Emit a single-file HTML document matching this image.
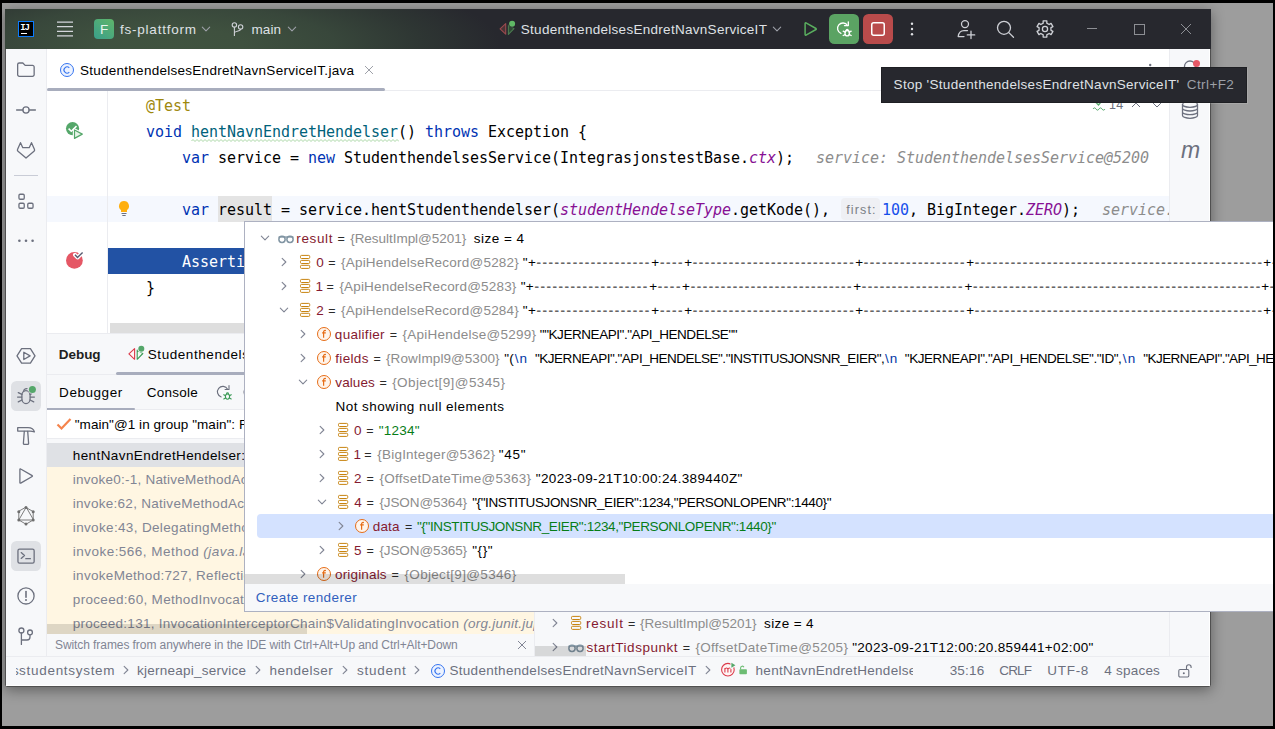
<!DOCTYPE html>
<html lang="en">
<head>
<meta charset="utf-8">
<title>StudenthendelsesEndretNavnServiceIT – fs-plattform</title>
<style>
*{box-sizing:border-box;margin:0;padding:0}
html,body{width:1275px;height:729px;overflow:hidden;background:#000}
body{position:relative;font-family:"Liberation Sans",sans-serif;font-size:13.5px;color:#000}
div,span,svg{position:absolute;white-space:pre}
i,b,.n,.ty,.g,.e,.pl,.da,.k,.s{position:static}
.mono{font-family:"DejaVu Sans Mono","Liberation Mono",monospace;font-size:15px;line-height:26px;height:26px;letter-spacing:-.03px}
.k{color:#0033b3}
.n{color:#862a3e}.ty{color:#8c8c8c}.g{color:#067d17}.e{color:#0037a6}
.ic{stroke:#6c707e;fill:none;stroke-width:1.3;stroke-linecap:round;stroke-linejoin:round}
#desktop{left:2px;top:3px;width:1271px;height:723px;background:#9d9d9d}
#win{left:5px;top:9px;width:1206px;height:678px;background:#fff;border:1px solid #505050;border-radius:1.500px;box-shadow:0 3px 14px 0 rgba(0,0,0,.4)}
#titlebar{left:5px;top:9px;width:1206px;height:40px;background:#27282e;overflow:hidden}
#titleglow{left:0;top:0;width:1205px;height:40px;background:radial-gradient(ellipse 330px 80px at 165px 36px,#40533f 0%,#3f513f 22%,#38473b 50%,#2e3633 76%,#27282e 100%)}
#lstripe{left:6px;top:49px;width:41px;height:607px;background:#f7f8fa;border-right:1px solid #ebecf0}
#rstripe{left:1169px;top:49px;width:41px;height:607px;background:#f7f8fa;border-left:1px solid #ebecf0}
#popup{left:244px;top:221px;width:1029px;height:391px;background:#fff;border:1px solid #adb1c1;border-right:0}
#tooltip{left:881px;top:67px;width:366px;height:36px;background:#27282e;border:1px solid #1e1f23;box-shadow:1px 1px 0 rgba(255,255,255,.13)}
.pl{letter-spacing:1px}.da{letter-spacing:1.48px}
</style>
</head>
<body>
<div id="desktop"></div>
<div id="win"></div>
<div id="titlebar"><div id="titleglow"></div></div>
<div style="left:18px;top:21px;width:16px;height:16px;background:#000;border:1px solid #0a7bff"></div>
<span style="left:20.300px;top:23.700px;font:bold 9px/9px 'Liberation Mono',monospace;color:#fff;letter-spacing:-1.100px">IJ</span>
<div style="left:20.8px;top:32.7px;width:6.3px;height:1.3px;background:#fff;"></div>
<svg style="left:55px;top:19px;" width="20" height="20" viewBox="0 0 20 20"><path d="M2 3.200h16M2 7.700h16M2 12.300h16M2 16.800h16" stroke="#d3d5db" stroke-width="1.300" fill="none"/></svg>
<div style="left:94px;top:19px;width:20px;height:20px;background:linear-gradient(40deg,#3a9f8b 0%,#5fb56a 100%);border-radius:4px"></div>
<span class="t" style="left:94px;top:19.5px;font-size:13.5px;line-height:20px;height:20px;color:#eaf6ee;letter-spacing:0px;width:20px;text-align:center;">F</span>
<span class="t" style="left:119.909px;top:20px;font-size:13.5px;line-height:20px;height:20px;color:#dfe1e5;letter-spacing:0.788px;">fs-plattform</span>
<svg style="left:200px;top:23px;" width="12" height="12" viewBox="0 0 12 12"><path d="M2.3 4.15L6 7.85L9.7 4.15" stroke="#9da0a8" stroke-width="1.1" fill="none" stroke-linecap="round" stroke-linejoin="round"/></svg>
<svg style="left:229px;top:21px;" width="16" height="16" viewBox="0 0 16 16"><g stroke="#ced0d6" stroke-width="1.100" fill="none"><circle cx="5.400" cy="3.900" r="2.200"/><circle cx="11.600" cy="5.900" r="2.200"/><path d="M5.400 6.100v8.900M11.600 8.100c0 2.900-6.200 1.600-6.200 3.900"/></g></svg>
<span class="t" style="left:251.404px;top:20px;font-size:13.5px;line-height:20px;height:20px;color:#dfe1e5;letter-spacing:0.136px;">main</span>
<svg style="left:286px;top:23px;" width="12" height="12" viewBox="0 0 12 12"><path d="M2.3 4.15L6 7.85L9.7 4.15" stroke="#9da0a8" stroke-width="1.1" fill="none" stroke-linecap="round" stroke-linejoin="round"/></svg>
<svg style="left:496px;top:18px;" width="22" height="22" viewBox="0 0 22 22"><path d="M9.700 5.600v10.600L4.100 10.800z" stroke="#9a4a4e" stroke-width="1.100" fill="#4a3436" stroke-linejoin="round"/><path d="M12.400 7v9.400l5.600-5.800z" stroke="#4b7a50" stroke-width="1.100" fill="#2f4a36" stroke-linejoin="round"/><circle cx="16.100" cy="5.700" r="3.700" fill="#27282e"/><circle cx="16.100" cy="5.700" r="3" fill="#5fb865"/></svg>
<span class="t" style="left:520.787px;top:20px;font-size:13.5px;line-height:20px;height:20px;color:#dfe1e5;letter-spacing:0.286px;">StudenthendelsesEndretNavnServiceIT</span>
<svg style="left:771px;top:23px;" width="12" height="12" viewBox="0 0 12 12"><path d="M2.3 4.15L6 7.85L9.7 4.15" stroke="#9da0a8" stroke-width="1.1" fill="none" stroke-linecap="round" stroke-linejoin="round"/></svg>
<svg style="left:800px;top:19px;" width="20" height="20" viewBox="0 0 20 20"><path d="M5.100 4.400v11.200a.6 .6 0 0 0 .9 .5l10-5.600a.6 .6 0 0 0 0-1l-10-5.600a.6 .6 0 0 0-.9 .5z" stroke="#5aae5f" stroke-width="1.500" fill="none" stroke-linejoin="round"/></svg>
<div style="left:829px;top:14px;width:30px;height:30px;background:#5ba363;border-radius:5.500px"></div>
<svg style="left:834px;top:19px;" width="20" height="20" viewBox="0 0 20 20"><g stroke="#fff" stroke-width="1.350" fill="none" stroke-linecap="round" stroke-linejoin="round"><path d="M6.900 14.400A5.400 5.400 0 1 1 13.500 6.500"/><path d="M14.300 2.800v3.800h-3.800"/><ellipse cx="13.200" cy="14.200" rx="2.200" ry="2.700"/><path d="M9.200 12.200l1.900 1M9.200 16.500l1.900-.9M17.200 12.200l-1.900 1M17.200 16.500l-1.900-.9M12.300 11.300c0-1.200 1.800-1.200 1.800 0"/></g></svg>
<div style="left:863px;top:14px;width:30px;height:30px;background:#b94b4b;border-radius:5.500px"></div>
<svg style="left:868px;top:19px;" width="20" height="20" viewBox="0 0 20 20"><rect x="3.750" y="3.750" width="12.500" height="12.500" rx="2" stroke="#fff" stroke-width="1.500" fill="none"/></svg>
<svg style="left:902px;top:19px;" width="20" height="20" viewBox="0 0 20 20"><g fill="#dfe1e5"><circle cx="10" cy="4.800" r="1.200"/><circle cx="10" cy="10" r="1.200"/><circle cx="10" cy="15.300" r="1.200"/></g></svg>
<svg style="left:955px;top:18px;" width="22" height="22" viewBox="0 0 22 22"><g stroke="#ced0d6" stroke-width="1.300" fill="none" stroke-linecap="round" stroke-linejoin="round"><circle cx="10" cy="6.100" r="3.500"/><path d="M9 18.600H3.200c.4-3.400 2.500-6 5.800-6h3.500M12.300 16.900h7.400M16 13.200v7.400"/></g></svg>
<svg style="left:994px;top:18px;" width="22" height="22" viewBox="0 0 22 22"><g stroke="#ced0d6" stroke-width="1.300" fill="none" stroke-linecap="round"><circle cx="10" cy="9.800" r="6.500"/><path d="M14.800 14.600l4.700 4.700"/></g></svg>
<svg style="left:1034px;top:18px;" width="22" height="22" viewBox="0 0 22 22"><g stroke="#ced0d6" stroke-width="1.300" fill="none" stroke-linejoin="round"><path d="M12.87 2.91L9.13 2.91L9.22 5.17L6.84 6.54L4.93 5.34L3.06 8.57L5.06 9.63L5.06 12.37L3.06 13.43L4.93 16.66L6.84 15.46L9.22 16.83L9.13 19.09L12.87 19.09L12.78 16.83L15.16 15.46L17.07 16.66L18.94 13.43L16.94 12.37L16.94 9.63L18.94 8.57L17.07 5.34L15.16 6.54L12.78 5.17z"/><circle cx="11" cy="11" r="2.600"/></g></svg>
<div style="left:1087px;top:28px;width:10px;height:1px;background:#8d8f94;"></div>
<div style="left:1134px;top:24px;width:10.5px;height:10.5px;background:transparent;border:1px solid #8d8f94"></div>
<svg style="left:1180px;top:23px;" width="12" height="12" viewBox="0 0 12 12"><path d="M1 1l10 10M11 1L1 11" stroke="#8d8f94" stroke-width="1" fill="none"/></svg>
<div id="lstripe"></div>
<div style="left:11px;top:381px;width:30px;height:30px;background:#dfe1e5;border-radius:5.500px"></div>
<div style="left:11px;top:541px;width:30px;height:30px;background:#dfe1e5;border-radius:5.500px"></div>
<div style="left:14px;top:175px;width:24px;height:1px;background:#c9ccd6;"></div>
<svg class="ic" style="left:6px;top:49px" width="41" height="607" viewBox="6 49 41 607"><path d="M17.650 64.600a1.600 1.600 0 0 1 1.600-1.600h3.600l2.300 2.400h7.400a1.600 1.600 0 0 1 1.600 1.600v7.700a1.600 1.600 0 0 1-1.600 1.600H19.250a1.600 1.600 0 0 1-1.600-1.600z"/><circle cx="26" cy="110" r="3.100"/><path d="M16.600 110h6.300M29.100 110h6.300"/><path d="M20.500 142.700L22.800 147.700H29.200L31.500 142.700L34.500 149.600a1.500 1.500 0 0 1-.5 1.700L26 158L18 151.300a1.500 1.500 0 0 1-.5-1.700z"/><rect x="18.950" y="194.250" width="5.300" height="5" rx="1.200"/><rect x="18.950" y="203.250" width="5.300" height="5" rx="1.200"/><rect x="27.750" y="203.250" width="5.300" height="5" rx="1.200"/><g fill="#6c707e" stroke="none"><circle cx="19.400" cy="240.700" r="1.300"/><circle cx="26" cy="240.700" r="1.300"/><circle cx="32.600" cy="240.700" r="1.300"/></g><path d="M21.600 348.600h8.800l4.600 7.300-4.600 7.300h-8.800l-4.600-7.300z"/><path d="M23.800 352.300v7.200l6.300-3.600z"/><path d="M21.900 395.300a4.100 4.600 0 0 1 8.200 0v3.400a4.100 4.900 0 0 1-8.200 0z"/><path d="M21.600 397.100h-4M30.400 397.100h4M21.900 394.400l-3.600-1.800M21.900 400l-3.600 1.900M30.100 394.400l1.500-.8M30.100 400l3.600 1.900M23.700 391.600c0-1.800 1.300-3 3.300-3"/><circle cx="32.400" cy="389.500" r="4.300" fill="#dfe1e5" stroke="none"/><circle cx="32.400" cy="389.500" r="3.500" fill="#55a76a" stroke="none"/><path d="M17.700 427.700h10.300c3.300 0 5.700 1.500 6.400 4.200c-1.500-.6-3-.8-4.400-.8H17.700z"/><path d="M24.300 431.300L23.400 443.200a1 1 0 0 0 1 1.100h3.200a1 1 0 0 0 1-1.100L27.700 431.300"/><path d="M19.900 469.400v13.300a.5 .5 0 0 0 .8 .4l11.500-6.600a.5 .5 0 0 0 0-.9l-11.500-6.600a.5 .5 0 0 0-.8 .4z"/><g stroke="#6e6e6e" stroke-width="0.900"><path d="M26 507.500l7.200 4.100v8.400L26 524.200l-7.200-4.200v-8.400z"/><path d="M26 507.500L18.800 520h14.400z"/></g><g fill="#6e6e6e" stroke="none"><circle cx="26" cy="507.600" r="1.500"/><circle cx="33.200" cy="511.700" r="1.500"/><circle cx="33.200" cy="520" r="1.500"/><circle cx="26" cy="524.100" r="1.500"/><circle cx="18.800" cy="520" r="1.500"/><circle cx="18.800" cy="511.700" r="1.500"/></g><rect x="17.950" y="549.050" width="16.200" height="14" rx="1.600"/><path d="M21.200 552.600l3.300 2.900-3.300 2.900M25.800 558.700h4.600"/><circle cx="26" cy="595.900" r="8.100"/><path d="M26 591.600v5.600" stroke-width="1.600"/><circle cx="26" cy="600.100" r="1" fill="#6c707e" stroke="none"/><circle cx="21.400" cy="630.500" r="2.500"/><circle cx="30" cy="632.400" r="2.400"/><path d="M21.400 633v11.400M30 634.800v2.200a3 3 0 0 1-3 3h-5.600"/></svg>
<div id="rstripe"></div>
<svg style="left:1180px;top:57px;" width="20" height="20" viewBox="0 0 20 20"><path d="M4.500 14.500V9.500a5.500 5.500 0 0 1 11 0v5l1.500 2H3zM8 18.500h4" class="ic"/></svg>
<div style="left:1193.3px;top:59.9px;width:7px;height:7px;background:#e55765;border-radius:50%"></div>
<svg style="left:1180px;top:100px;" width="20" height="20" viewBox="0 0 20 20"><g class="ic"><ellipse cx="10" cy="4.500" rx="7.500" ry="2.800"/><path d="M2.500 4.500v11c0 1.500 3.400 2.800 7.500 2.800s7.500-1.300 7.500-2.800v-11M2.500 8.200c0 1.500 3.400 2.800 7.500 2.800s7.500-1.300 7.500-2.800M2.500 11.900c0 1.500 3.400 2.800 7.500 2.800s7.500-1.300 7.500-2.800"/></g></svg>
<span style="left:1179.500px;top:134.500px;width:22px;text-align:center;font:italic 23px/30px 'Liberation Sans',sans-serif;color:#6c707e">m</span>
<div style="left:47px;top:49px;width:1122px;height:285px;overflow:hidden;"><div style="left:-47px;top:-49px;width:1275px;height:729px">
<div style="left:47px;top:49px;width:1122px;height:285px;background:#fff;"></div>
<div style="left:47px;top:90px;width:1122px;height:1px;background:#ebecf0;"></div>
<div style="left:47px;top:88px;width:338px;height:3px;background:#a8adbd;border-radius:1.500px"></div>
<svg style="left:59px;top:62px;" width="16" height="16" viewBox="0 0 16 16"><circle cx="8" cy="8" r="6.500" fill="#edf3ff" stroke="#3574f0" stroke-width="1"/><path d="M10.300 5.800a3.100 3.100 0 1 0 0 4.400" fill="none" stroke="#3574f0" stroke-width="1.100"/></svg>
<span class="t" style="left:79.887px;top:61px;font-size:13.5px;line-height:20px;height:20px;letter-spacing:0.274px;">StudenthendelsesEndretNavnServiceIT.java</span>
<svg style="left:362.7px;top:64px;" width="12" height="12" viewBox="0 0 12 12"><path d="M2.3 2.3L9.7 9.7M9.7 2.3L2.3 9.7" stroke="#9da0a8" stroke-width="1" fill="none" stroke-linecap="round"/></svg>
<svg style="left:1140px;top:60px;" width="20" height="20" viewBox="0 0 20 20"><g fill="#6c707e"><circle cx="10.200" cy="5" r="1.200"/><circle cx="10.200" cy="10" r="1.200"/><circle cx="10.200" cy="15" r="1.200"/></g></svg>
<div style="left:47px;top:196px;width:1122px;height:26px;background:#f5f8fe;"></div>
<div style="left:107px;top:91px;width:1px;height:242px;background:#ebecf0;"></div>
<div style="left:218px;top:196px;width:54px;height:26px;background:#e4e4e4;"></div>
<div style="left:108px;top:248px;width:1061px;height:26px;background:#2252a4;"></div>
<span class="mono" style="left:146px;top:93px;color:#9e880d;">@Test</span>
<span class="mono" style="left:146px;top:119px;"><span class="k">void</span> <span class="s" style="color:#00627a">hentNavnEndretHendelser</span>() <span class="k">throws</span> Exception {</span>
<svg style="left:190.5px;top:139px;" width="208" height="3" viewBox="0 0 208 3"><path d="M0.500 2L2 0.500L4 2.500L6 0.500L8 2.500L10 0.500L12 2.500L14 0.500L16 2.500L18 0.500L20 2.500L22 0.500L24 2.500L26 0.500L28 2.500L30 0.500L32 2.500L34 0.500L36 2.500L38 0.500L40 2.500L42 0.500L44 2.500L46 0.500L48 2.500L50 0.500L52 2.500L54 0.500L56 2.500L58 0.500L60 2.500L62 0.500L64 2.500L66 0.500L68 2.500L70 0.500L72 2.500L74 0.500L76 2.500L78 0.500L80 2.500L82 0.500L84 2.500L86 0.500L88 2.500L90 0.500L92 2.500L94 0.500L96 2.500L98 0.500L100 2.500L102 0.500L104 2.500L106 0.500L108 2.500L110 0.500L112 2.500L114 0.500L116 2.500L118 0.500L120 2.500L122 0.500L124 2.500L126 0.500L128 2.500L130 0.500L132 2.500L134 0.500L136 2.500L138 0.500L140 2.500L142 0.500L144 2.500L146 0.500L148 2.500L150 0.500L152 2.500L154 0.500L156 2.500L158 0.500L160 2.500L162 0.500L164 2.500L166 0.500L168 2.500L170 0.500L172 2.500L174 0.500L176 2.500L178 0.500L180 2.500L182 0.500L184 2.500L186 0.500L188 2.500L190 0.500L192 2.500L194 0.500L196 2.500L198 0.500L200 2.500L202 0.500L204 2.500L206 0.500L208 2.500" stroke="#a9d6a4" stroke-width="1" fill="none"/></svg>
<span class="mono" style="left:182px;top:145px;"><span class="k">var</span> service = <span class="k">new</span> StudenthendelsesService(IntegrasjonstestBase.<i style="color:#871094">ctx</i>);</span>
<span class="mono" style="left:816px;top:145px;color:#8c8c8c;font-style:italic;">service: StudenthendelsesService@5200</span>
<span class="mono" style="left:182px;top:197px;"><span class="k">var</span> result = service.hentStudenthendelser(<i style="color:#871094">studentHendelseType</i>.getKode(),</span>
<div style="left:841px;top:198px;width:39px;height:21.5px;background:#eff0f4;border-radius:4px"></div>
<span class="t" style="left:846.223px;top:199.5px;font-size:12.5px;line-height:20px;height:20px;color:#7a7e85;letter-spacing:1.142px;">first:</span>
<span class="mono" style="left:882px;top:197px;"><span style="position:static;color:#1750eb">100</span>, BigInteger.<i style="color:#871094">ZERO</i>);</span>
<span class="mono" style="left:1102px;top:197px;color:#8c8c8c;font-style:italic;">service.</span>
<span class="mono" style="left:182px;top:249px;color:#fff;">Asserti</span>
<span class="mono" style="left:146px;top:275px;">}</span>
<svg style="left:64px;top:120px;" width="22" height="22" viewBox="0 0 22 22"><circle cx="8.550" cy="8.550" r="6.600" fill="#55a76a"/><path d="M4.600 8.600l2.700 2.700 5.200-5.200" stroke="#fff" stroke-width="1.500" fill="none"/><path d="M10.400 9.800v8.800l8.200-4.500z" fill="#fff" stroke="#fff" stroke-width="3.200" stroke-linejoin="round"/><path d="M10.500 10v8.400l7.800-4.300z" fill="#e6f4e8" stroke="#55a76a" stroke-width="1.200" stroke-linejoin="round"/></svg>
<svg style="left:116px;top:200px;" width="16" height="18" viewBox="0 0 16 18"><path d="M8 1a5 5 0 0 0-3 9v2h6v-2a5 5 0 0 0-3-9z" fill="#ffaf0f"/><path d="M5.500 13.500h5M6.300 15.500h3.400" stroke="#6c707e" stroke-width="1" fill="none"/></svg>
<svg style="left:64px;top:250px;" width="22" height="22" viewBox="0 0 22 22"><circle cx="10.400" cy="10.400" r="8.400" fill="#e55765"/><path d="M11 4.800l2.500 2.700 5.100-5.100" stroke="#fff" stroke-width="4" fill="none" stroke-linecap="round" stroke-linejoin="round"/><path d="M11 4.800l2.500 2.700 5.100-5.100" stroke="#565b70" stroke-width="1.400" fill="none"/></svg>
<svg style="left:1091.5px;top:96px;" width="14" height="16" viewBox="0 0 14 16"><path d="M3 5.500l3.500 3.500 5-6" stroke="#55a76a" stroke-width="1.500" fill="none"/><path d="M1 13c1-1.500 2-1.500 3 0s2 1.500 3 0 2-1.500 3 0 2 1.500 3 0" stroke="#55a76a" stroke-width="1" fill="none"/></svg>
<span class="t" style="left:1109.048px;top:95px;font-size:12.5px;line-height:20px;height:20px;color:#6c707e;letter-spacing:0.25px;">14</span>
<svg style="left:1130px;top:99px;" width="12" height="12" viewBox="0 0 12 12"><path d="M2 8l4-4 4 4" stroke="#6c707e" stroke-width="1" fill="none"/></svg>
<svg style="left:1151px;top:99px;" width="12" height="12" viewBox="0 0 12 12"><path d="M2 4l4 4 4-4" stroke="#6c707e" stroke-width="1" fill="none"/></svg>
<div style="left:110px;top:323px;width:1059px;height:10px;background:#dedede;"></div>
<div style="left:47px;top:333px;width:1122px;height:1px;background:#ebecf0;"></div>
</div></div>
<div style="left:47px;top:334px;width:1122px;height:322px;overflow:hidden;"><div style="left:-47px;top:-334px;width:1275px;height:729px">
<div style="left:47px;top:334px;width:1122px;height:322px;background:#f7f8fa;"></div>
<span class="t" style="left:58.797px;top:345px;font-size:13.5px;line-height:20px;height:20px;color:#1e1f22;font-weight:bold;letter-spacing:-0.048px;">Debug</span>
<svg style="left:127px;top:345px;" width="18" height="18" viewBox="0 0 18 18"><path d="M7.600 3.600V14.300L1.900 8.900z" stroke="#db3b4b" stroke-width="1.100" fill="#fff7f7" stroke-linejoin="round"/><path d="M10.200 5V14.300L15.800 8.500z" stroke="#3a9a55" stroke-width="1.100" fill="#f2fcf3" stroke-linejoin="round"/><circle cx="14.300" cy="3.800" r="3.800" fill="#f7f8fa"/><circle cx="14.300" cy="3.800" r="3" fill="#55a76a"/></svg>
<span class="t" style="left:147.787px;top:345px;font-size:13.5px;line-height:20px;height:20px;letter-spacing:0.561px;">StudenthendelsesEndretNavnServiceIT</span>
<div style="left:47px;top:374px;width:1122px;height:1px;background:#ebecf0;"></div>
<div style="left:116px;top:372px;width:300px;height:3px;background:#a8adbd;border-radius:1.500px"></div>
<span class="t" style="left:59.093px;top:383px;font-size:13.5px;line-height:20px;height:20px;letter-spacing:0.548px;">Debugger</span>
<span class="t" style="left:146.814px;top:383px;font-size:13.5px;line-height:20px;height:20px;letter-spacing:0.242px;">Console</span>
<svg style="left:214px;top:382px;" width="20" height="20" viewBox="0 0 20 20"><g fill="none" stroke-linecap="round" stroke-linejoin="round"><path d="M7.200 14.900A5.400 5.400 0 1 1 13.600 7.200" stroke="#6c707e" stroke-width="1.100"/><path d="M15 3.600v3.900h-3.900" stroke="#6c707e" stroke-width="1.100"/><g stroke="#3a9a55" stroke-width="1.100"><ellipse cx="13.500" cy="14.600" rx="2.100" ry="2.600"/><path d="M9.800 12.700l1.800 1M9.800 17l1.800-.9M17.200 12.700l-1.800 1M17.200 17l-1.800-.9M12.600 11.700c0-1.200 1.800-1.200 1.800 0"/></g></g></svg>
<svg style="left:242px;top:383px;" width="18" height="18" viewBox="0 0 18 18"><circle cx="9" cy="9" r="7" stroke="#6c707e" stroke-width="1.100" fill="none"/></svg>
<div style="left:47px;top:409px;width:1122px;height:1px;background:#ebecf0;"></div>
<div style="left:47px;top:407.5px;width:88px;height:2.5px;background:#a8adbd;border-radius:0 1.500px 1.500px 0"></div>
<div style="left:47px;top:410px;width:487px;height:28px;background:#fff;"></div>
<svg style="left:56px;top:417px;" width="16" height="14" viewBox="0 0 16 14"><path d="M1.500 7.500l4 4L14.500 2" stroke="#f5844c" stroke-width="2.200" fill="none"/></svg>
<span class="t" style="left:74.727px;top:415px;font-size:13.5px;line-height:20px;height:20px;letter-spacing:0.061px;">"main"@1 in group "main": RUNNING</span>
<div style="left:47px;top:438px;width:487px;height:1px;background:#ebecf0;"></div>
<div style="left:47px;top:443px;width:487px;height:191px;overflow:hidden;"><div style="left:-47px;top:-443px;width:1275px;height:729px">
<div style="left:47px;top:443px;width:487px;height:24px;background:#dfe1e5;"></div>
<span class="t" style="left:72.764px;top:446px;font-size:13.5px;line-height:20px;height:20px;color:#000;letter-spacing:0.409px;">hentNavnEndretHendelser:38, StudenthendelsesEndretNavnServiceIT<i></i></span>
<div style="left:47px;top:467px;width:487px;height:24px;background:#fff6e2;"></div>
<span class="t" style="left:72.797px;top:470px;font-size:13.5px;line-height:20px;height:20px;color:#818594;letter-spacing:0.234px;">invoke0:-1, NativeMethodAccessorImpl<i> (jdk.internal.reflect)</i></span>
<div style="left:47px;top:491px;width:487px;height:24px;background:#fff6e2;"></div>
<span class="t" style="left:72.797px;top:494px;font-size:13.5px;line-height:20px;height:20px;color:#818594;letter-spacing:0.285px;">invoke:62, NativeMethodAccessorImpl<i> (jdk.internal.reflect)</i></span>
<div style="left:47px;top:515px;width:487px;height:24px;background:#fff6e2;"></div>
<span class="t" style="left:72.797px;top:518px;font-size:13.5px;line-height:20px;height:20px;color:#818594;letter-spacing:0.347px;">invoke:43, DelegatingMethodAccessorImpl<i> (jdk.internal.reflect)</i></span>
<div style="left:47px;top:539px;width:487px;height:24px;background:#fff6e2;"></div>
<span class="t" style="left:72.797px;top:542px;font-size:13.5px;line-height:20px;height:20px;color:#818594;letter-spacing:0.472px;">invoke:566, Method<i> (java.lang.reflect)</i></span>
<div style="left:47px;top:563px;width:487px;height:24px;background:#fff6e2;"></div>
<span class="t" style="left:72.797px;top:566px;font-size:13.5px;line-height:20px;height:20px;color:#818594;letter-spacing:0.302px;">invokeMethod:727, ReflectionUtils<i> (org.junit.platform.commons.util)</i></span>
<div style="left:47px;top:587px;width:487px;height:24px;background:#fff6e2;"></div>
<span class="t" style="left:72.83px;top:590px;font-size:13.5px;line-height:20px;height:20px;color:#818594;letter-spacing:0.309px;">proceed:60, MethodInvocation<i> (org.junit.jupiter.engine.execution)</i></span>
<div style="left:47px;top:611px;width:487px;height:24px;background:#fff6e2;"></div>
<span class="t" style="left:72.83px;top:614px;font-size:13.5px;line-height:20px;height:20px;color:#818594;letter-spacing:0.251px;">proceed:131, InvocationInterceptorChain$ValidatingInvocation<i> (org.junit.jupiter.engine.execution)</i></span>
<div style="left:47px;top:624px;width:260px;height:10px;background:rgba(0,0,0,.13);"></div>
</div></div>
<div style="left:47px;top:634px;width:487px;height:22px;background:#f7f8fa;"></div>
<span class="t" style="left:54.955px;top:635px;font-size:12px;line-height:20px;height:20px;color:#818594;letter-spacing:-0.074px;">Switch frames from anywhere in the IDE with Ctrl+Alt+Up and Ctrl+Alt+Down</span>
<svg style="left:516px;top:639px;" width="12" height="12" viewBox="0 0 12 12"><path d="M2.3 2.3L9.7 9.7M9.7 2.3L2.3 9.7" stroke="#818594" stroke-width="1" fill="none" stroke-linecap="round"/></svg>
<div style="left:534px;top:410px;width:1px;height:246px;background:#ebecf0;"></div>
<svg style="left:548.5px;top:617px;" width="12" height="12" viewBox="0 0 12 12"><path d="M4.15 2.3L7.85 6L4.15 9.7" stroke="#818594" stroke-width="1.1" fill="none" stroke-linecap="round" stroke-linejoin="round"/></svg>
<svg style="left:569px;top:614px;" width="14" height="18" viewBox="0 0 14 18"><g stroke="#c7830f" stroke-width="1" fill="none"><rect x="2.500" y="2.400" width="9.200" height="3.100" rx="1"/><rect x="2.500" y="7.400" width="9.200" height="3.100" rx="1"/><rect x="2.500" y="12.300" width="9.200" height="3.100" rx="1"/></g></svg>
<span class="t" style="left:586.004px;top:614px;font-size:13.5px;line-height:20px;height:20px;color:#851a30;letter-spacing:0.776px;">result</span>
<span class="t" style="left:627.997px;top:614px;font-size:12.5px;line-height:20px;height:20px;color:#2b2b2b;">=</span>
<span class="t" style="left:639.976px;top:614px;font-size:13.5px;line-height:20px;height:20px;color:#8c8c8c;letter-spacing:-0.004px;">{ResultImpl@5201}</span>
<span class="t" style="left:764.024px;top:614px;font-size:13.5px;line-height:20px;height:20px;letter-spacing:0.381px;">size = 4</span>
<svg style="left:548.5px;top:641px;" width="12" height="12" viewBox="0 0 12 12"><path d="M4.15 2.3L7.85 6L4.15 9.7" stroke="#818594" stroke-width="1.1" fill="none" stroke-linecap="round" stroke-linejoin="round"/></svg>
<svg style="left:567.3px;top:640.5px;" width="18" height="14" viewBox="0 0 18 14"><g stroke="#8195a3" stroke-width="1.500" fill="none"><rect x="1.900" y="4.300" width="6.200" height="6.200" rx="2.900"/><rect x="9.900" y="4.300" width="6.200" height="6.200" rx="2.900"/><path d="M1.600 5h14.800" stroke-width="1.300"/></g></svg>
<span class="t" style="left:586.524px;top:638px;font-size:13.5px;line-height:20px;height:20px;color:#851a30;letter-spacing:0.514px;">startTidspunkt</span>
<span class="t" style="left:682.647px;top:638px;font-size:12.5px;line-height:20px;height:20px;color:#2b2b2b;">=</span>
<span class="t" style="left:695.376px;top:638px;font-size:13.5px;line-height:20px;height:20px;color:#8c8c8c;letter-spacing:0.301px;">{OffsetDateTime@5205}</span>
<span class="t" style="left:852.127px;top:638px;font-size:13.5px;line-height:20px;height:20px;letter-spacing:0.344px;">"2023-09-21T12:00:20.859441+02:00"</span>
<div style="left:535px;top:646px;width:51px;height:10px;background:rgba(0,0,0,.13);"></div>
</div></div>
<div style="left:6px;top:656px;width:1204px;height:30px;overflow:hidden;"><div style="left:-6px;top:-656px;width:1275px;height:729px">
<div style="left:6px;top:656px;width:1204px;height:30px;background:#f7f8fa;"></div>
<div style="left:6px;top:656px;width:1204px;height:1px;background:#ebecf0;"></div>
<div style="left:15.6px;top:657px;width:110px;height:28px;overflow:hidden;"><div style="left:-15.6px;top:-657px;width:1275px;height:729px">
<span class="t" style="left:12.1px;top:661px;font-size:13.5px;line-height:20px;height:20px;color:#6c707e;letter-spacing:0px;">s</span>
<span class="t" style="left:19.124px;top:661px;font-size:13.5px;line-height:20px;height:20px;color:#6c707e;letter-spacing:0.702px;">studentsystem</span>
</div></div>
<svg style="left:119.7px;top:664.2px;" width="12" height="12" viewBox="0 0 12 12"><path d="M4.15 2.3L7.85 6L4.15 9.7" stroke="#818594" stroke-width="1.1" fill="none" stroke-linecap="round" stroke-linejoin="round"/></svg>
<span class="t" style="left:137.09px;top:661px;font-size:13.5px;line-height:20px;height:20px;color:#6c707e;letter-spacing:0.24px;">kjerneapi_service</span>
<svg style="left:251.7px;top:664.2px;" width="12" height="12" viewBox="0 0 12 12"><path d="M4.15 2.3L7.85 6L4.15 9.7" stroke="#818594" stroke-width="1.1" fill="none" stroke-linecap="round" stroke-linejoin="round"/></svg>
<span class="t" style="left:269.464px;top:661px;font-size:13.5px;line-height:20px;height:20px;color:#6c707e;letter-spacing:0.508px;">hendelser</span>
<svg style="left:339px;top:664.2px;" width="12" height="12" viewBox="0 0 12 12"><path d="M4.15 2.3L7.85 6L4.15 9.7" stroke="#818594" stroke-width="1.1" fill="none" stroke-linecap="round" stroke-linejoin="round"/></svg>
<span class="t" style="left:356.924px;top:661px;font-size:13.5px;line-height:20px;height:20px;color:#6c707e;letter-spacing:0.746px;">student</span>
<svg style="left:411.3px;top:664.2px;" width="12" height="12" viewBox="0 0 12 12"><path d="M4.15 2.3L7.85 6L4.15 9.7" stroke="#818594" stroke-width="1.1" fill="none" stroke-linecap="round" stroke-linejoin="round"/></svg>
<svg style="left:430px;top:663px;" width="16" height="16" viewBox="0 0 16 16"><circle cx="8" cy="8" r="6.500" fill="#edf3ff" stroke="#3574f0" stroke-width="1"/><path d="M10.300 5.800a3.100 3.100 0 1 0 0 4.400" fill="none" stroke="#3574f0" stroke-width="1.100"/></svg>
<span class="t" style="left:449.387px;top:661px;font-size:13.5px;line-height:20px;height:20px;color:#6c707e;letter-spacing:0.31px;">StudenthendelsesEndretNavnServiceIT</span>
<svg style="left:701.9px;top:664.2px;" width="12" height="12" viewBox="0 0 12 12"><path d="M4.15 2.3L7.85 6L4.15 9.7" stroke="#818594" stroke-width="1.1" fill="none" stroke-linecap="round" stroke-linejoin="round"/></svg>
<svg style="left:719px;top:661px;" width="18" height="18" viewBox="0 0 18 18"><circle cx="8.900" cy="8.700" r="6.300" fill="#fff5f5" stroke="#db3b4b" stroke-width="1.100"/><path d="M5.900 11.600V6.900M5.900 8.200c.6-1.500 2.600-1.600 3 0v3.400M8.900 8.200c.6-1.500 2.800-1.600 3 0v3.400" stroke="#db3b4b" stroke-width="1.100" fill="none"/><path d="M12.200 1.600l4.400 2.700-4.400 2.700z" fill="#fff" stroke="#f7f8fa" stroke-width="1.600"/><path d="M12.400 1.800l4 2.500-4 2.500z" fill="#55a76a"/></svg>
<svg style="left:738px;top:665px;" width="10" height="10" viewBox="0 0 10 10"><rect x="1.400" y="4.200" width="7.500" height="5" rx=".8" fill="#6cbc73"/><path d="M2.600 4.500V2.900a1.700 1.700 0 0 1 3.300-.6" stroke="#6cbc73" stroke-width="1.100" fill="none"/></svg>
<div style="left:750px;top:657px;width:162.7px;height:28px;overflow:hidden;"><div style="left:-750px;top:-657px;width:1275px;height:729px">
<span class="t" style="left:755.564px;top:661px;font-size:13.5px;line-height:20px;height:20px;color:#6c707e;letter-spacing:0.291px;">hentNavnEndretHendelser</span>
</div></div>
<span class="t" style="left:949.686px;top:661px;font-size:13.5px;line-height:20px;height:20px;color:#6c707e;letter-spacing:0.178px;">35:16</span>
<span class="t" style="left:999.314px;top:661px;font-size:13.5px;line-height:20px;height:20px;color:#6c707e;letter-spacing:-0.88px;">CRLF</span>
<span class="t" style="left:1047.158px;top:661px;font-size:13.5px;line-height:20px;height:20px;color:#6c707e;letter-spacing:0.745px;">UTF-8</span>
<span class="t" style="left:1104.29px;top:661px;font-size:13.5px;line-height:20px;height:20px;color:#6c707e;letter-spacing:0.222px;">4 spaces</span>
<svg style="left:1177px;top:663px;" width="16" height="16" viewBox="0 0 16 16"><g stroke="#6c707e" stroke-width="1.100" fill="none"><rect x="1.800" y="6.500" width="10" height="7.500" rx="1.200"/><path d="M9.500 6.500V4a2.300 2.300 0 0 1 4.600 0v1"/></g><circle cx="6.800" cy="10.200" r="1" fill="#6c707e"/></svg>
</div></div>
<div style="left:1209px;top:49px;width:1px;height:637px;background:#fff;"></div>
<div style="left:6px;top:685px;width:1204px;height:1px;background:#fff;"></div>
<div id="tooltip"></div>
<span class="t" style="left:893.587px;top:75px;font-size:13.5px;line-height:20px;height:20px;color:#dfe1e5;letter-spacing:0.303px;">Stop 'StudenthendelsesEndretNavnServiceIT'</span>
<span class="t" style="left:1186.814px;top:75px;font-size:13.5px;line-height:20px;height:20px;color:#9da0a8;letter-spacing:0.404px;">Ctrl+F2</span>
<div id="popup"></div>
<div style="left:245px;top:222px;width:1028px;height:389px;overflow:hidden;"><div style="left:-245px;top:-222px;width:1275px;height:729px">
<svg style="left:258.8px;top:232px;" width="12" height="12" viewBox="0 0 12 12"><path d="M2.3 4.15L6 7.85L9.7 4.15" stroke="#818594" stroke-width="1.1" fill="none" stroke-linecap="round" stroke-linejoin="round"/></svg>
<svg style="left:277px;top:231.5px;" width="18" height="14" viewBox="0 0 18 14"><g stroke="#8195a3" stroke-width="1.500" fill="none"><rect x="1.900" y="4.300" width="6.200" height="6.200" rx="2.900"/><rect x="9.900" y="4.300" width="6.200" height="6.200" rx="2.900"/><path d="M1.600 5h14.800" stroke-width="1.300"/></g></svg>
<span class="t" style="left:296.304px;top:229px;font-size:13.5px;line-height:20px;height:20px;color:#851a30;letter-spacing:0.636px;">result</span>
<span class="t" style="left:337.497px;top:229px;font-size:12.5px;line-height:20px;height:20px;color:#2b2b2b;">=</span>
<span class="t" style="left:350.176px;top:229px;font-size:13.5px;line-height:20px;height:20px;color:#8c8c8c;letter-spacing:-0.035px;">{ResultImpl@5201}</span>
<span class="t" style="left:473.824px;top:229px;font-size:13.5px;line-height:20px;height:20px;letter-spacing:0.466px;">size = 4</span>
<svg style="left:277.8px;top:256px;" width="12" height="12" viewBox="0 0 12 12"><path d="M4.15 2.3L7.85 6L4.15 9.7" stroke="#818594" stroke-width="1.1" fill="none" stroke-linecap="round" stroke-linejoin="round"/></svg>
<svg style="left:298px;top:253px;" width="14" height="18" viewBox="0 0 14 18"><g stroke="#c7830f" stroke-width="1" fill="none"><rect x="2.500" y="2.400" width="9.200" height="3.100" rx="1"/><rect x="2.500" y="7.400" width="9.200" height="3.100" rx="1"/><rect x="2.500" y="12.300" width="9.200" height="3.100" rx="1"/></g></svg>
<span class="t" style="left:316.192px;top:253px;font-size:13.5px;line-height:20px;height:20px;color:#851a30;">0</span>
<span class="t" style="left:328.347px;top:253px;font-size:12.5px;line-height:20px;height:20px;color:#2b2b2b;">=</span>
<span class="t" style="left:340.976px;top:253px;font-size:13.5px;line-height:20px;height:20px;color:#8c8c8c;letter-spacing:0.219px;">{ApiHendelseRecord@5282}</span>
<span class="t" style="left:522.802px;top:253px;font-size:13.5px;line-height:20px;height:20px;">"</span>
<span class="t" style="left:527.958px;top:253px;font-size:13.5px;line-height:20px;height:20px;">+</span>
<span class="t" style="left:536.55px;top:253px;line-height:20px;height:20px;font-weight:bold;letter-spacing:1.519px;color:#666">-------------------</span>
<span class="t" style="left:651.358px;top:253px;font-size:13.5px;line-height:20px;height:20px;">+</span>
<span class="t" style="left:659.95px;top:253px;line-height:20px;height:20px;font-weight:bold;letter-spacing:1.519px;color:#666">----</span>
<span class="t" style="left:684.158px;top:253px;font-size:13.5px;line-height:20px;height:20px;">+</span>
<span class="t" style="left:692.75px;top:253px;line-height:20px;height:20px;font-weight:bold;letter-spacing:1.519px;color:#666">---------------------------</span>
<span class="t" style="left:855.258px;top:253px;font-size:13.5px;line-height:20px;height:20px;">+</span>
<span class="t" style="left:863.85px;top:253px;line-height:20px;height:20px;font-weight:bold;letter-spacing:1.519px;color:#666">-----------------</span>
<span class="t" style="left:966.158px;top:253px;font-size:13.5px;line-height:20px;height:20px;">+</span>
<span class="t" style="left:974.75px;top:253px;line-height:20px;height:20px;font-weight:bold;letter-spacing:1.519px;color:#666">------------------------------------------------</span>
<span class="t" style="left:1263.358px;top:253px;font-size:13.5px;line-height:20px;height:20px;">+</span>
<span class="t" style="left:1271.95px;top:253px;line-height:20px;height:20px;font-weight:bold;letter-spacing:1.519px;color:#666">--------</span>
<svg style="left:277.8px;top:280px;" width="12" height="12" viewBox="0 0 12 12"><path d="M4.15 2.3L7.85 6L4.15 9.7" stroke="#818594" stroke-width="1.1" fill="none" stroke-linecap="round" stroke-linejoin="round"/></svg>
<svg style="left:298px;top:277px;" width="14" height="18" viewBox="0 0 14 18"><g stroke="#c7830f" stroke-width="1" fill="none"><rect x="2.500" y="2.400" width="9.200" height="3.100" rx="1"/><rect x="2.500" y="7.400" width="9.200" height="3.100" rx="1"/><rect x="2.500" y="12.300" width="9.200" height="3.100" rx="1"/></g></svg>
<span class="t" style="left:315.558px;top:277px;font-size:13.5px;line-height:20px;height:20px;color:#851a30;">1</span>
<span class="t" style="left:326.597px;top:277px;font-size:12.5px;line-height:20px;height:20px;color:#2b2b2b;">=</span>
<span class="t" style="left:339.376px;top:277px;font-size:13.5px;line-height:20px;height:20px;color:#8c8c8c;letter-spacing:0.18px;">{ApiHendelseRecord@5283}</span>
<span class="t" style="left:520.802px;top:277px;font-size:13.5px;line-height:20px;height:20px;">"</span>
<span class="t" style="left:525.858px;top:277px;font-size:13.5px;line-height:20px;height:20px;">+</span>
<span class="t" style="left:534.45px;top:277px;line-height:20px;height:20px;font-weight:bold;letter-spacing:1.519px;color:#666">-------------------</span>
<span class="t" style="left:649.258px;top:277px;font-size:13.5px;line-height:20px;height:20px;">+</span>
<span class="t" style="left:657.85px;top:277px;line-height:20px;height:20px;font-weight:bold;letter-spacing:1.519px;color:#666">----</span>
<span class="t" style="left:682.058px;top:277px;font-size:13.5px;line-height:20px;height:20px;">+</span>
<span class="t" style="left:690.65px;top:277px;line-height:20px;height:20px;font-weight:bold;letter-spacing:1.519px;color:#666">---------------------------</span>
<span class="t" style="left:853.158px;top:277px;font-size:13.5px;line-height:20px;height:20px;">+</span>
<span class="t" style="left:861.75px;top:277px;line-height:20px;height:20px;font-weight:bold;letter-spacing:1.519px;color:#666">-----------------</span>
<span class="t" style="left:964.458px;top:277px;font-size:13.5px;line-height:20px;height:20px;">+</span>
<span class="t" style="left:973.05px;top:277px;line-height:20px;height:20px;font-weight:bold;letter-spacing:1.519px;color:#666">------------------------------------------------</span>
<span class="t" style="left:1261.258px;top:277px;font-size:13.5px;line-height:20px;height:20px;">+</span>
<span class="t" style="left:1269.85px;top:277px;line-height:20px;height:20px;font-weight:bold;letter-spacing:1.519px;color:#666">--------</span>
<svg style="left:277.8px;top:304px;" width="12" height="12" viewBox="0 0 12 12"><path d="M2.3 4.15L6 7.85L9.7 4.15" stroke="#818594" stroke-width="1.1" fill="none" stroke-linecap="round" stroke-linejoin="round"/></svg>
<svg style="left:298px;top:301px;" width="14" height="18" viewBox="0 0 14 18"><g stroke="#c7830f" stroke-width="1" fill="none"><rect x="2.500" y="2.400" width="9.200" height="3.100" rx="1"/><rect x="2.500" y="7.400" width="9.200" height="3.100" rx="1"/><rect x="2.500" y="12.300" width="9.200" height="3.100" rx="1"/></g></svg>
<span class="t" style="left:316.192px;top:301px;font-size:13.5px;line-height:20px;height:20px;color:#851a30;">2</span>
<span class="t" style="left:328.347px;top:301px;font-size:12.5px;line-height:20px;height:20px;color:#2b2b2b;">=</span>
<span class="t" style="left:340.976px;top:301px;font-size:13.5px;line-height:20px;height:20px;color:#8c8c8c;letter-spacing:0.219px;">{ApiHendelseRecord@5284}</span>
<span class="t" style="left:522.802px;top:301px;font-size:13.5px;line-height:20px;height:20px;">"</span>
<span class="t" style="left:527.958px;top:301px;font-size:13.5px;line-height:20px;height:20px;">+</span>
<span class="t" style="left:536.55px;top:301px;line-height:20px;height:20px;font-weight:bold;letter-spacing:1.519px;color:#666">-------------------</span>
<span class="t" style="left:651.358px;top:301px;font-size:13.5px;line-height:20px;height:20px;">+</span>
<span class="t" style="left:659.95px;top:301px;line-height:20px;height:20px;font-weight:bold;letter-spacing:1.519px;color:#666">----</span>
<span class="t" style="left:684.158px;top:301px;font-size:13.5px;line-height:20px;height:20px;">+</span>
<span class="t" style="left:692.75px;top:301px;line-height:20px;height:20px;font-weight:bold;letter-spacing:1.519px;color:#666">---------------------------</span>
<span class="t" style="left:855.258px;top:301px;font-size:13.5px;line-height:20px;height:20px;">+</span>
<span class="t" style="left:863.85px;top:301px;line-height:20px;height:20px;font-weight:bold;letter-spacing:1.519px;color:#666">-----------------</span>
<span class="t" style="left:966.158px;top:301px;font-size:13.5px;line-height:20px;height:20px;">+</span>
<span class="t" style="left:974.75px;top:301px;line-height:20px;height:20px;font-weight:bold;letter-spacing:1.519px;color:#666">------------------------------------------------</span>
<span class="t" style="left:1263.358px;top:301px;font-size:13.5px;line-height:20px;height:20px;">+</span>
<span class="t" style="left:1271.95px;top:301px;line-height:20px;height:20px;font-weight:bold;letter-spacing:1.519px;color:#666">--------</span>
<svg style="left:296.8px;top:328px;" width="12" height="12" viewBox="0 0 12 12"><path d="M4.15 2.3L7.85 6L4.15 9.7" stroke="#818594" stroke-width="1.1" fill="none" stroke-linecap="round" stroke-linejoin="round"/></svg>
<svg style="left:316px;top:326px;" width="16" height="16" viewBox="0 0 16 16"><circle cx="8" cy="8" r="6.500" fill="#fff4eb" stroke="#e66d17" stroke-width="1"/><path d="M9.900 4.600c-1.500-.5-2.300.1-2.300 1.500v5.700M6.100 6.800h3.700" stroke="#e66d17" stroke-width="1.200" fill="none"/></svg>
<span class="t" style="left:334.833px;top:325px;font-size:13.5px;line-height:20px;height:20px;color:#851a30;letter-spacing:0.301px;">qualifier</span>
<span class="t" style="left:389.697px;top:325px;font-size:12.5px;line-height:20px;height:20px;color:#2b2b2b;">=</span>
<span class="t" style="left:402.476px;top:325px;font-size:13.5px;line-height:20px;height:20px;color:#8c8c8c;letter-spacing:0.244px;">{ApiHendelse@5299}</span>
<span class="t" style="left:539.827px;top:325px;font-size:13.5px;line-height:20px;height:20px;letter-spacing:-0.438px;">""KJERNEAPI"."API_HENDELSE""</span>
<svg style="left:296.8px;top:352px;" width="12" height="12" viewBox="0 0 12 12"><path d="M4.15 2.3L7.85 6L4.15 9.7" stroke="#818594" stroke-width="1.1" fill="none" stroke-linecap="round" stroke-linejoin="round"/></svg>
<svg style="left:316px;top:350px;" width="16" height="16" viewBox="0 0 16 16"><circle cx="8" cy="8" r="6.500" fill="#fff4eb" stroke="#e66d17" stroke-width="1"/><path d="M9.900 4.600c-1.500-.5-2.300.1-2.300 1.500v5.700M6.100 6.800h3.700" stroke="#e66d17" stroke-width="1.200" fill="none"/></svg>
<span class="t" style="left:335.209px;top:349px;font-size:13.5px;line-height:20px;height:20px;color:#851a30;letter-spacing:0.353px;">fields</span>
<span class="t" style="left:373.547px;top:349px;font-size:12.5px;line-height:20px;height:20px;color:#2b2b2b;">=</span>
<span class="t" style="left:386.076px;top:349px;font-size:13.5px;line-height:20px;height:20px;color:#8c8c8c;letter-spacing:0.049px;">{RowImpl9@5300}</span>
<span class="t" style="left:504.227px;top:349px;font-size:13.5px;line-height:20px;height:20px;letter-spacing:0.156px;">"(</span>
<span class="t" style="left:514.8px;top:349px;font-size:13.5px;line-height:20px;height:20px;color:#0037a6;letter-spacing:0.911px;">\n</span>
<span class="t" style="left:535.027px;top:349px;font-size:13.5px;line-height:20px;height:20px;letter-spacing:-0.486px;">"KJERNEAPI"."API_HENDELSE"."INSTITUSJONSNR_EIER",</span>
<span class="t" style="left:885px;top:349px;font-size:13.5px;line-height:20px;height:20px;color:#0037a6;letter-spacing:0.911px;">\n</span>
<span class="t" style="left:904.827px;top:349px;font-size:13.5px;line-height:20px;height:20px;letter-spacing:-0.438px;">"KJERNEAPI"."API_HENDELSE"."ID",</span>
<span class="t" style="left:1122.8px;top:349px;font-size:13.5px;line-height:20px;height:20px;color:#0037a6;letter-spacing:1.211px;">\n</span>
<span class="t" style="left:1143.327px;top:349px;font-size:13.5px;line-height:20px;height:20px;letter-spacing:-0.565px;">"KJERNEAPI"."API_HENDELSE"."INSTITUSJONSNR",</span>
<svg style="left:296.8px;top:376px;" width="12" height="12" viewBox="0 0 12 12"><path d="M2.3 4.15L6 7.85L9.7 4.15" stroke="#818594" stroke-width="1.1" fill="none" stroke-linecap="round" stroke-linejoin="round"/></svg>
<svg style="left:316px;top:374px;" width="16" height="16" viewBox="0 0 16 16"><circle cx="8" cy="8" r="6.500" fill="#fff4eb" stroke="#e66d17" stroke-width="1"/><path d="M9.900 4.600c-1.500-.5-2.300.1-2.300 1.500v5.700M6.100 6.800h3.700" stroke="#e66d17" stroke-width="1.200" fill="none"/></svg>
<span class="t" style="left:335.354px;top:373px;font-size:13.5px;line-height:20px;height:20px;color:#851a30;letter-spacing:0.081px;">values</span>
<span class="t" style="left:379.497px;top:373px;font-size:12.5px;line-height:20px;height:20px;color:#2b2b2b;">=</span>
<span class="t" style="left:392.176px;top:373px;font-size:13.5px;line-height:20px;height:20px;color:#8c8c8c;letter-spacing:0.406px;">{Object[9]@5345}</span>
<span class="t" style="left:335.493px;top:397px;font-size:13.5px;line-height:20px;height:20px;letter-spacing:0.458px;">Not showing null elements</span>
<svg style="left:315.8px;top:424px;" width="12" height="12" viewBox="0 0 12 12"><path d="M4.15 2.3L7.85 6L4.15 9.7" stroke="#818594" stroke-width="1.1" fill="none" stroke-linecap="round" stroke-linejoin="round"/></svg>
<svg style="left:336px;top:421px;" width="14" height="18" viewBox="0 0 14 18"><g stroke="#c7830f" stroke-width="1" fill="none"><rect x="2.500" y="2.400" width="9.200" height="3.100" rx="1"/><rect x="2.500" y="7.400" width="9.200" height="3.100" rx="1"/><rect x="2.500" y="12.300" width="9.200" height="3.100" rx="1"/></g></svg>
<span class="t" style="left:353.942px;top:421px;font-size:13.5px;line-height:20px;height:20px;color:#851a30;">0</span>
<span class="t" style="left:366.247px;top:421px;font-size:12.5px;line-height:20px;height:20px;color:#2b2b2b;">=</span>
<span class="t" style="left:378.727px;top:421px;font-size:13.5px;line-height:20px;height:20px;color:#067d17;letter-spacing:0.244px;">"1234"</span>
<svg style="left:315.8px;top:448px;" width="12" height="12" viewBox="0 0 12 12"><path d="M4.15 2.3L7.85 6L4.15 9.7" stroke="#818594" stroke-width="1.1" fill="none" stroke-linecap="round" stroke-linejoin="round"/></svg>
<svg style="left:336px;top:445px;" width="14" height="18" viewBox="0 0 14 18"><g stroke="#c7830f" stroke-width="1" fill="none"><rect x="2.500" y="2.400" width="9.200" height="3.100" rx="1"/><rect x="2.500" y="7.400" width="9.200" height="3.100" rx="1"/><rect x="2.500" y="12.300" width="9.200" height="3.100" rx="1"/></g></svg>
<span class="t" style="left:353.508px;top:445px;font-size:13.5px;line-height:20px;height:20px;color:#851a30;">1</span>
<span class="t" style="left:364.347px;top:445px;font-size:12.5px;line-height:20px;height:20px;color:#2b2b2b;">=</span>
<span class="t" style="left:377.276px;top:445px;font-size:13.5px;line-height:20px;height:20px;color:#8c8c8c;letter-spacing:0.217px;">{BigInteger@5362}</span>
<span class="t" style="left:498.727px;top:445px;font-size:13.5px;line-height:20px;height:20px;letter-spacing:0.713px;">"45"</span>
<svg style="left:315.8px;top:472px;" width="12" height="12" viewBox="0 0 12 12"><path d="M4.15 2.3L7.85 6L4.15 9.7" stroke="#818594" stroke-width="1.1" fill="none" stroke-linecap="round" stroke-linejoin="round"/></svg>
<svg style="left:336px;top:469px;" width="14" height="18" viewBox="0 0 14 18"><g stroke="#c7830f" stroke-width="1" fill="none"><rect x="2.500" y="2.400" width="9.200" height="3.100" rx="1"/><rect x="2.500" y="7.400" width="9.200" height="3.100" rx="1"/><rect x="2.500" y="12.300" width="9.200" height="3.100" rx="1"/></g></svg>
<span class="t" style="left:354.092px;top:469px;font-size:13.5px;line-height:20px;height:20px;color:#851a30;">2</span>
<span class="t" style="left:366.597px;top:469px;font-size:12.5px;line-height:20px;height:20px;color:#2b2b2b;">=</span>
<span class="t" style="left:379.376px;top:469px;font-size:13.5px;line-height:20px;height:20px;color:#8c8c8c;letter-spacing:0.261px;">{OffsetDateTime@5363}</span>
<span class="t" style="left:535.827px;top:469px;font-size:13.5px;line-height:20px;height:20px;letter-spacing:0.359px;">"2023-09-21T10:00:24.389440Z"</span>
<svg style="left:315.8px;top:496px;" width="12" height="12" viewBox="0 0 12 12"><path d="M2.3 4.15L6 7.85L9.7 4.15" stroke="#818594" stroke-width="1.1" fill="none" stroke-linecap="round" stroke-linejoin="round"/></svg>
<svg style="left:336px;top:493px;" width="14" height="18" viewBox="0 0 14 18"><g stroke="#c7830f" stroke-width="1" fill="none"><rect x="2.500" y="2.400" width="9.200" height="3.100" rx="1"/><rect x="2.500" y="7.400" width="9.200" height="3.100" rx="1"/><rect x="2.500" y="12.300" width="9.200" height="3.100" rx="1"/></g></svg>
<span class="t" style="left:354.285px;top:493px;font-size:13.5px;line-height:20px;height:20px;color:#851a30;">4</span>
<span class="t" style="left:366.597px;top:493px;font-size:12.5px;line-height:20px;height:20px;color:#2b2b2b;">=</span>
<span class="t" style="left:379.376px;top:493px;font-size:13.5px;line-height:20px;height:20px;color:#8c8c8c;letter-spacing:-0.1px;">{JSON@5364}</span>
<span class="t" style="left:472.127px;top:493px;font-size:13.5px;line-height:20px;height:20px;letter-spacing:-0.373px;">"{"INSTITUSJONSNR_EIER":1234,"PERSONLOPENR":1440}"</span>
<div style="left:257px;top:514px;width:1020px;height:24px;background:#d4e2ff;border-radius:4px 0 0 4px"></div>
<svg style="left:334.8px;top:520px;" width="12" height="12" viewBox="0 0 12 12"><path d="M4.15 2.3L7.85 6L4.15 9.7" stroke="#818594" stroke-width="1.1" fill="none" stroke-linecap="round" stroke-linejoin="round"/></svg>
<svg style="left:354px;top:518px;" width="16" height="16" viewBox="0 0 16 16"><circle cx="8" cy="8" r="6.500" fill="#fff4eb" stroke="#e66d17" stroke-width="1"/><path d="M9.900 4.600c-1.500-.5-2.300.1-2.300 1.500v5.700M6.100 6.800h3.700" stroke="#e66d17" stroke-width="1.200" fill="none"/></svg>
<span class="t" style="left:372.733px;top:517px;font-size:13.5px;line-height:20px;height:20px;color:#851a30;letter-spacing:0.195px;">data</span>
<span class="t" style="left:404.897px;top:517px;font-size:12.5px;line-height:20px;height:20px;color:#2b2b2b;">=</span>
<span class="t" style="left:416.927px;top:517px;font-size:13.5px;line-height:20px;height:20px;color:#067d17;letter-spacing:-0.373px;">"{"INSTITUSJONSNR_EIER":1234,"PERSONLOPENR":1440}"</span>
<svg style="left:315.8px;top:544px;" width="12" height="12" viewBox="0 0 12 12"><path d="M4.15 2.3L7.85 6L4.15 9.7" stroke="#818594" stroke-width="1.1" fill="none" stroke-linecap="round" stroke-linejoin="round"/></svg>
<svg style="left:336px;top:541px;" width="14" height="18" viewBox="0 0 14 18"><g stroke="#c7830f" stroke-width="1" fill="none"><rect x="2.500" y="2.400" width="9.200" height="3.100" rx="1"/><rect x="2.500" y="7.400" width="9.200" height="3.100" rx="1"/><rect x="2.500" y="12.300" width="9.200" height="3.100" rx="1"/></g></svg>
<span class="t" style="left:354.105px;top:541px;font-size:13.5px;line-height:20px;height:20px;color:#851a30;">5</span>
<span class="t" style="left:366.597px;top:541px;font-size:12.5px;line-height:20px;height:20px;color:#2b2b2b;">=</span>
<span class="t" style="left:379.376px;top:541px;font-size:13.5px;line-height:20px;height:20px;color:#8c8c8c;letter-spacing:-0.1px;">{JSON@5365}</span>
<span class="t" style="left:472.127px;top:541px;font-size:13.5px;line-height:20px;height:20px;letter-spacing:0.613px;">"{}"</span>
<svg style="left:296.8px;top:568px;" width="12" height="12" viewBox="0 0 12 12"><path d="M4.15 2.3L7.85 6L4.15 9.7" stroke="#818594" stroke-width="1.1" fill="none" stroke-linecap="round" stroke-linejoin="round"/></svg>
<svg style="left:316px;top:566px;" width="16" height="16" viewBox="0 0 16 16"><circle cx="8" cy="8" r="6.500" fill="#fff4eb" stroke="#e66d17" stroke-width="1"/><path d="M9.900 4.600c-1.500-.5-2.300.1-2.300 1.500v5.700M6.100 6.800h3.700" stroke="#e66d17" stroke-width="1.200" fill="none"/></svg>
<span class="t" style="left:335.033px;top:565px;font-size:13.5px;line-height:20px;height:20px;color:#851a30;letter-spacing:0.159px;">originals</span>
<span class="t" style="left:391.597px;top:565px;font-size:12.5px;line-height:20px;height:20px;color:#2b2b2b;">=</span>
<span class="t" style="left:404.476px;top:565px;font-size:13.5px;line-height:20px;height:20px;color:#8c8c8c;letter-spacing:0.326px;">{Object[9]@5346}</span>
<div style="left:245px;top:574px;width:380px;height:10px;background:rgba(0,0,0,.13);"></div>
<div style="left:245px;top:584px;width:1028px;height:27px;background:#f7f8fa;"></div>
<span class="t" style="left:255.814px;top:588px;font-size:13.5px;line-height:20px;height:20px;color:#315fbd;letter-spacing:0.4px;">Create renderer</span>
</div></div>
</body>
</html>
